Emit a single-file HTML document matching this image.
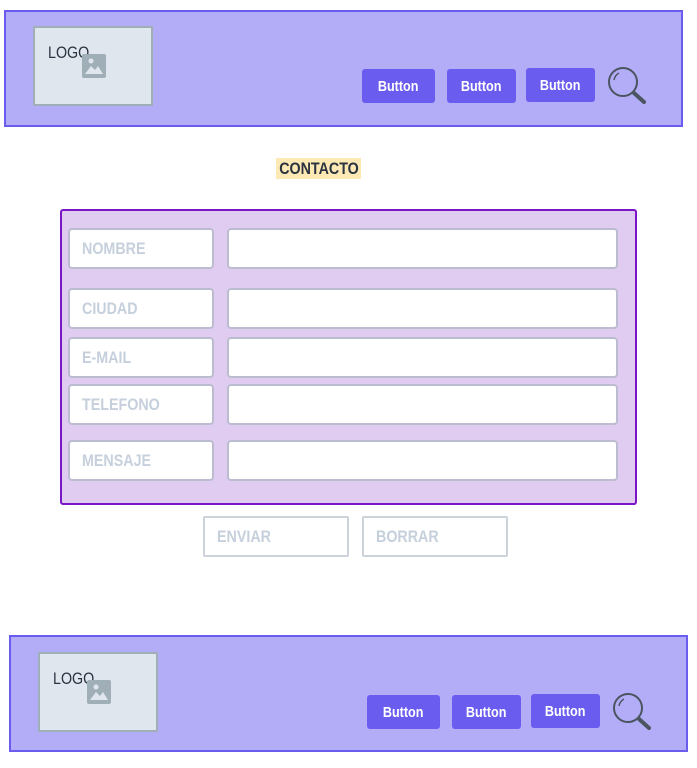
<!DOCTYPE html>
<html><head><meta charset="utf-8"><style>
*{box-sizing:border-box;margin:0;padding:0}
body{width:697px;height:768px;background:#fff;position:relative;font-family:"Liberation Sans",sans-serif;overflow:hidden}
.abs{position:absolute}
.n{display:inline-block;transform:scaleX(.84);transform-origin:left center;white-space:nowrap}
.c{display:inline-block;transform:scaleX(.84);transform-origin:center;white-space:nowrap}
.hdr{background:#b3adf8;border:2px solid #6b5cf0}
.logo{background:#e0e6ee;border:2px solid #a0aeb8;font-size:17px;color:#2a3340}
.btn{background:#6b5cf0;color:#fff;border-radius:3px;font-weight:bold;font-size:15px;display:flex;align-items:center;justify-content:center}
.form{background:#e0ccf0;border:2px solid #7a16c8;border-radius:3px}
.lbl,.inp{background:#fff;border:2px solid #bcbcd0;border-radius:4px}
.lbl{color:#c6d0dc;font-weight:bold;font-size:17px;padding-left:12px;display:flex;align-items:center}
.ob{background:#fff;border:2px solid #ccd3da;border-radius:2px;color:#c6d0dc;font-weight:bold;font-size:17px;padding-left:12px;display:flex;align-items:center}
</style></head><body>

<div class="abs hdr" style="left:4px;top:10px;width:679px;height:117px"></div>
<div class="abs logo" style="left:33px;top:26px;width:120px;height:80px"><span class="abs n" style="left:13px;top:15px">LOGO</span>
<svg class="abs" style="left:47px;top:26px" width="24" height="24" viewBox="0 0 24 24"><rect width="24" height="24" rx="2" fill="#a0aeb8"/><circle cx="9" cy="7" r="2.5" fill="#e0e6ee"/><path d="M3 20 L9 12 L13 16 L16 12 L21 20Z" fill="#e0e6ee"/></svg></div>
<div class="abs btn" style="left:362px;top:69px;width:73px;height:34px"><span class="c">Button</span></div>
<div class="abs btn" style="left:447px;top:69px;width:69px;height:34px"><span class="c">Button</span></div>
<div class="abs btn" style="left:526px;top:68px;width:69px;height:34px"><span class="c">Button</span></div>
<svg class="abs" style="left:607px;top:66px" width="42" height="40"><circle cx="16" cy="16" r="14" fill="none" stroke="#4a5560" stroke-width="2"/><path d="M7 14 Q8 9 12 7" stroke="#4a5560" stroke-width="1.5" fill="none"/><line x1="27" y1="27" x2="37" y2="36" stroke="#4a5560" stroke-width="4" stroke-linecap="round"/></svg>

<div class="abs" style="left:276px;top:158px;width:85px;height:21px;background:#fde9b4;color:#2a3340;font-weight:bold;font-size:17px;line-height:21px"><span class="abs" style="left:50%;top:0;white-space:nowrap;transform:translateX(-50%) scaleX(.84)">CONTACTO</span></div>

<div class="abs form" style="left:60px;top:209px;width:577px;height:296px"></div>
<div class="abs lbl" style="left:68px;top:228px;width:146px;height:41px"><span class="n">NOMBRE</span></div>
<div class="abs inp" style="left:227px;top:228px;width:391px;height:41px"></div>
<div class="abs lbl" style="left:68px;top:288px;width:146px;height:41px"><span class="n">CIUDAD</span></div>
<div class="abs inp" style="left:227px;top:288px;width:391px;height:41px"></div>
<div class="abs lbl" style="left:68px;top:337px;width:146px;height:41px"><span class="n">E-MAIL</span></div>
<div class="abs inp" style="left:227px;top:337px;width:391px;height:41px"></div>
<div class="abs lbl" style="left:68px;top:384px;width:146px;height:41px"><span class="n">TELEFONO</span></div>
<div class="abs inp" style="left:227px;top:384px;width:391px;height:41px"></div>
<div class="abs lbl" style="left:68px;top:440px;width:146px;height:41px"><span class="n">MENSAJE</span></div>
<div class="abs inp" style="left:227px;top:440px;width:391px;height:41px"></div>

<div class="abs ob" style="left:203px;top:516px;width:146px;height:41px"><span class="n">ENVIAR</span></div>
<div class="abs ob" style="left:362px;top:516px;width:146px;height:41px"><span class="n">BORRAR</span></div>

<div class="abs hdr" style="left:9px;top:635px;width:679px;height:117px"></div>
<div class="abs logo" style="left:38px;top:652px;width:120px;height:80px"><span class="abs n" style="left:13px;top:15px">LOGO</span>
<svg class="abs" style="left:47px;top:26px" width="24" height="24" viewBox="0 0 24 24"><rect width="24" height="24" rx="2" fill="#a0aeb8"/><circle cx="9" cy="7" r="2.5" fill="#e0e6ee"/><path d="M3 20 L9 12 L13 16 L16 12 L21 20Z" fill="#e0e6ee"/></svg></div>
<div class="abs btn" style="left:367px;top:695px;width:73px;height:34px"><span class="c">Button</span></div>
<div class="abs btn" style="left:452px;top:695px;width:69px;height:34px"><span class="c">Button</span></div>
<div class="abs btn" style="left:531px;top:694px;width:69px;height:34px"><span class="c">Button</span></div>
<svg class="abs" style="left:612px;top:692px" width="42" height="40"><circle cx="16" cy="16" r="14" fill="none" stroke="#4a5560" stroke-width="2"/><path d="M7 14 Q8 9 12 7" stroke="#4a5560" stroke-width="1.5" fill="none"/><line x1="27" y1="27" x2="37" y2="36" stroke="#4a5560" stroke-width="4" stroke-linecap="round"/></svg>

</body></html>
